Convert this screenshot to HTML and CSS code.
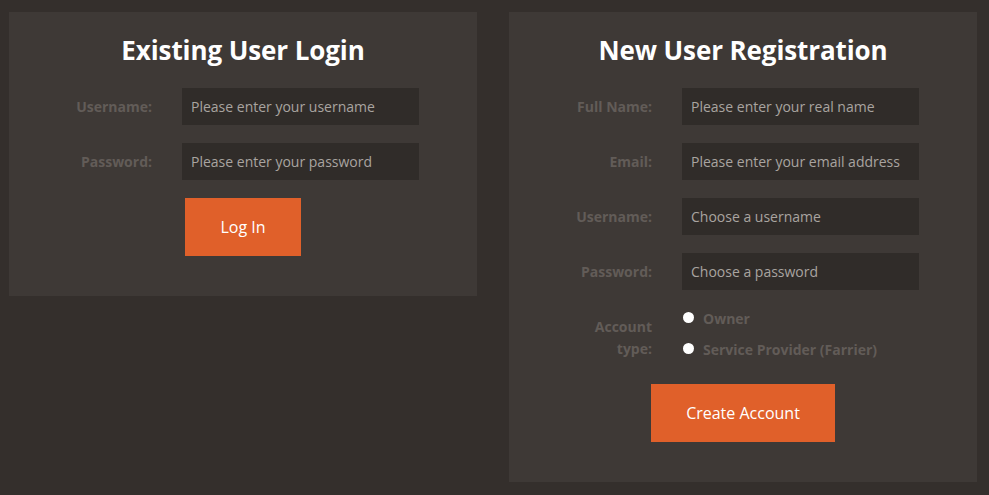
FILE: index.html
```html
<!DOCTYPE html>
<html>
<head>
<meta charset="utf-8">
<link rel="stylesheet" href="styles.css">
</head>
<body>
<div class="page">
  <section class="panel">
    <h2 class="panel-title">Existing User Login</h2>
    <form class="form">
      <label class="label">Username:</label>
      <input class="field" type="text" placeholder="Please enter your username">
      <label class="label">Password:</label>
      <input class="field" type="password" placeholder="Please enter your password">
    </form>
    <div class="actions"><button class="btn">Log In</button></div>
  </section>
  <section class="panel">
    <h2 class="panel-title">New User Registration</h2>
    <form class="form">
      <label class="label">Full Name:</label>
      <input class="field" type="text" placeholder="Please enter your real name">
      <label class="label">Email:</label>
      <input class="field" type="text" placeholder="Please enter your email address">
      <label class="label">Username:</label>
      <input class="field" type="text" placeholder="Choose a username">
      <label class="label">Password:</label>
      <input class="field" type="password" placeholder="Choose a password">
      <label class="label label-multi">Account type:</label>
      <div class="radios">
        <label class="radio"><input type="radio" name="acct" class="radio-dot"><span>Owner</span></label>
        <label class="radio"><input type="radio" name="acct" class="radio-dot"><span>Service Provider (Farrier)</span></label>
      </div>
    </form>
    <div class="actions"><button class="btn">Create Account</button></div>
  </section>
</div>
</body>
</html>
```
FILE: styles.css
```css
html, body {
  margin: 0;
  padding: 0;
  background: #342f2c;
  font-family: "Open Sans", "DejaVu Sans", sans-serif;
}
.page {
  display: flex;
  align-items: flex-start;
  gap: 32px;
  padding: 12px 12px 0 9px;
}
.panel {
  width: 468px;
  background: #3e3936;
  padding: 20px 0 40px;
  box-sizing: border-box;
}
.panel-title {
  margin: 0 0 20px;
  text-align: center;
  color: #ffffff;
  font-family: "Open Sans", sans-serif;
  font-weight: 700;
  font-size: 26px;
  line-height: 36px;
  letter-spacing: -0.1px;
}
.form {
  display: grid;
  grid-template-columns: 80px 237px;
  column-gap: 30px;
  row-gap: 18px;
  margin-left: 63px;
  align-items: center;
}
.label {
  text-align: right;
  color: #625c58;
  font-size: 14px;
  font-weight: 700;
  line-height: 22px;
  padding-top: 1px;
}
.label-multi {
  align-self: start;
  padding-top: 8px;
}
.field {
  height: 37px;
  box-sizing: border-box;
  border: none;
  outline: none;
  background: #302c29;
  color: #d0cbc7;
  padding: 0 9px;
  font-family: "Open Sans", sans-serif;
  font-size: 14px;
}
.field::placeholder {
  color: #a9a4a0;
  opacity: 1;
}
.radios {
  display: flex;
  flex-direction: column;
  margin-top: -5px;
  margin-bottom: 1px;
}
.radio {
  display: flex;
  align-items: center;
  height: 31px;
  color: #625c58;
  font-size: 14px;
  font-weight: 700;
}
.radio-dot {
  appearance: none;
  -webkit-appearance: none;
  width: 11px;
  height: 11px;
  margin: -2px 9px 0 1px;
  border-radius: 50%;
  background: #ffffff;
  border: none;
}
.actions {
  display: flex;
  justify-content: center;
  margin-top: 18px;
}
.btn {
  background: #e0602a;
  color: #ffffff;
  border: none;
  font-family: "Open Sans", sans-serif;
  font-size: 16px;
  line-height: 22px;
  padding: 18px 35px;
}
```
